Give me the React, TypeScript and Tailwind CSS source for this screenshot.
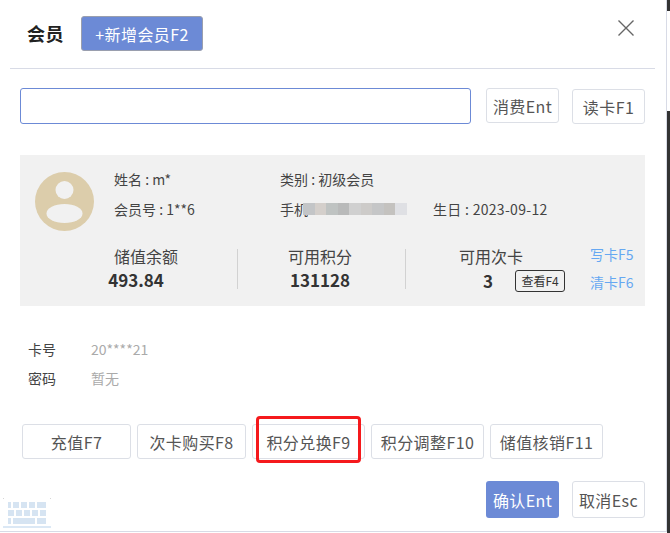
import { JSX, ReactNode } from 'react'

const Btn = ({ children, className = '' }: { children: ReactNode; className?: string }): JSX.Element => (
  <button
    className={`flex items-center justify-center rounded-[3px] border border-[#dcdfe6] bg-white text-[16px] tracking-[0.4px] text-[#555] ${className}`}
  >
    {children}
  </button>
)

const Stat = ({ label, value, className = '', valueClass = '' }: { label: string; value: string; className?: string; valueClass?: string }): JSX.Element => (
  <div className={`flex flex-col items-center ${className}`}>
    <span className="text-[16px] leading-[20px] text-[#444]">{label}</span>
    <span className={`mt-[4px] text-[17px] leading-[20px] font-bold text-[#333] ${valueClass}`}>{value}</span>
  </div>
)

const blurBlocks = [
  'bg-[#c3c5c7]', 'bg-[#d4cfcb]', 'bg-[#bfc3c2]', 'bg-[#b9baba]', 'bg-[#d0d0d0]',
  'bg-[#cdcbc9]', 'bg-[#c5c6c7]', 'bg-[#c4c2bf]', 'bg-[#dfe0e4]'
]

const KeyRow = ({ keys }: { keys: string[] }): JSX.Element => (
  <div className="flex gap-[2px]">
    {keys.map((k, i) => (
      <div key={i} className={`h-[6px] bg-[#d6e4f2] ${k}`} />
    ))}
  </div>
)

export default function App(): JSX.Element {
  return (
    <div
      className="flex h-[533px] w-[670px] overflow-hidden bg-white"
      style={{ fontFamily: '"Noto Sans CJK SC", "Open Sans", sans-serif' }}
    >
      <div className="flex h-[532px] w-[667px] flex-col border-r border-b border-[#d8dbe6] bg-white">
        <header className="mr-[11px] ml-[10px] flex h-[69px] items-start border-b border-[#d8dbe6] pt-[16px] pl-[17px]">
          <h1 className="mt-[5px] text-[18px] leading-[24px] font-bold tracking-[0.5px] text-[#222]">会员</h1>
          <button className="ml-[17px] h-[35px] w-[122px] rounded-[3px] border border-[#9a9fae] bg-[#6c8ad6] text-[16px] tracking-[0.4px] text-white">
            +新增会员F2
          </button>
          <svg className="mt-[4px] mr-[21px] ml-auto" width="16" height="16" viewBox="0 0 16 16" fill="none" stroke="#666" strokeWidth="1.4">
            <path d="M0.5 0.5l15 15M15.5 0.5L0.5 15.5" />
          </svg>
        </header>

        <div className="mt-[19px] flex items-start px-[20px]">
          <input className="h-[36px] w-[451px] rounded-[3px] border border-[#6c8ad6] bg-white outline-none" />
          <Btn className="ml-[15px] h-[35px] w-[73px]">消费Ent</Btn>
          <Btn className="mt-[1px] ml-[13px] h-[35px] w-[73px]">读卡F1</Btn>
        </div>

        <section className="mx-[20px] mt-[31px] h-[151px] w-[625px] bg-[#f1f1f1] pt-[17px]">
          <div className="flex">
            <svg className="ml-[15px] shrink-0" width="59" height="59" viewBox="0 0 59 59">
              <circle cx="29.5" cy="29.5" r="29.5" fill="#dccdab" />
              <circle cx="29.5" cy="18" r="9" fill="#f1f1f1" />
              <ellipse cx="29.5" cy="41.5" rx="18" ry="9.5" fill="#f1f1f1" />
            </svg>
            <div className="-mt-[3px] ml-[20px] flex flex-col gap-[10px] text-[14px] leading-[20px] text-[#444]">
              <div className="flex">
                <span className="w-[166px]">姓名 : m*</span>
                <span>类别 : 初级会员</span>
              </div>
              <div className="flex">
                <span className="w-[166px]">会员号 : 1**6</span>
                <span className="flex w-[153px] items-center">
                  手机
                  <span className="-ml-[5px] flex h-[12px]">
                    {blurBlocks.map(c => (
                      <span key={c} className={`h-full w-[11.5px] ${c}`} />
                    ))}
                  </span>
                </span>
                <span className="tracking-[0.3px]">生日 : 2023-09-12</span>
              </div>
            </div>
          </div>
          <div className="mt-[15px] flex items-start">
            <Stat label="储值余额" value="493.84" className="ml-[84px] w-[84px]" valueClass="mr-[20px]" />
            <div className="mt-[3px] ml-[49px] h-[40px] w-px bg-[#d2d2d2]" />
            <Stat label="可用积分" value="131128" className="ml-[42px] w-[80px]" />
            <div className="mt-[3px] ml-[45px] h-[40px] w-px bg-[#d2d2d2]" />
            <div className="ml-[53px] w-[107px]">
              <span className="block text-[16px] leading-[20px] text-[#444]">可用次卡</span>
              <div className="mt-[2px] flex items-center">
                <span className="ml-[24px] text-[17px] font-bold text-[#333]">3</span>
                <button className="ml-[22px] h-[22px] w-[50px] rounded-[3px] border border-[#333] text-[12px] leading-[20px] text-[#333]">
                  查看F4
                </button>
              </div>
            </div>
            <div className="-mt-[2px] ml-[24px] flex flex-col gap-[8px] text-[14px] leading-[20px] text-[#66a8f2]">
              <span>写卡F5</span>
              <span>清卡F6</span>
            </div>
          </div>
        </section>

        <dl className="mt-[33px] ml-[28px] flex flex-col gap-[9px] text-[14px] leading-[20px]">
          <div className="flex">
            <dt className="w-[63px] text-[#444]">卡号</dt>
            <dd className="text-[#aaa]">20****21</dd>
          </div>
          <div className="flex">
            <dt className="w-[63px] text-[#444]">密码</dt>
            <dd className="text-[#aaa]">暂无</dd>
          </div>
        </dl>

        <div className="mt-[36px] ml-[22px] flex gap-[6px]">
          <Btn className="h-[35px] w-[109px]">充值F7</Btn>
          <Btn className="h-[35px] w-[109px]">次卡购买F8</Btn>
          <div className="relative">
            <Btn className="h-[35px] w-[113px]">积分兑换F9</Btn>
            <div className="absolute -top-[8px] left-[4px] h-[47px] w-[105px] rounded-[4px] border-[3px] border-[#f5191c]" />
          </div>
          <Btn className="h-[35px] w-[113px]">积分调整F10</Btn>
          <Btn className="h-[35px] w-[113px]">储值核销F11</Btn>
        </div>

        <div className="relative mt-[22px] mr-[21px] flex justify-end gap-[13px]">
          <button className="h-[37px] w-[73px] rounded-[3px] bg-[#6c8ad6] text-[16px] tracking-[0.4px] text-white">确认Ent</button>
          <Btn className="h-[37px] w-[73px]">取消Esc</Btn>
          <div className="absolute top-[17px] left-[3px] flex h-[30px] w-[48px] flex-col gap-[2px] border-b-2 border-[#dbe8f5] pt-[4px] pl-[5px]">
            <span className="absolute top-0 left-0 h-px w-px bg-[#d6d6d6]" />
            <span className="absolute top-0 right-0 h-px w-px bg-[#d6d6d6]" />
            <KeyRow keys={['w-[3px]', 'w-[6px]', 'w-[6px]', 'w-[6px]', 'w-[9px]']} />
            <KeyRow keys={['w-[6px]', 'w-[6px]', 'w-[6px]', 'w-[6px]', 'w-[6px]']} />
            <KeyRow keys={['w-[3px]', 'w-[22px]', 'w-[9px]']} />
          </div>
        </div>
      </div>
      <div className="flex w-[3px] flex-col">
        <div className="h-[11px] bg-[#333]" />
        <div className="h-[100px] bg-white" />
        <div className="flex-1 bg-[#333]" />
      </div>
    </div>
  )
}
